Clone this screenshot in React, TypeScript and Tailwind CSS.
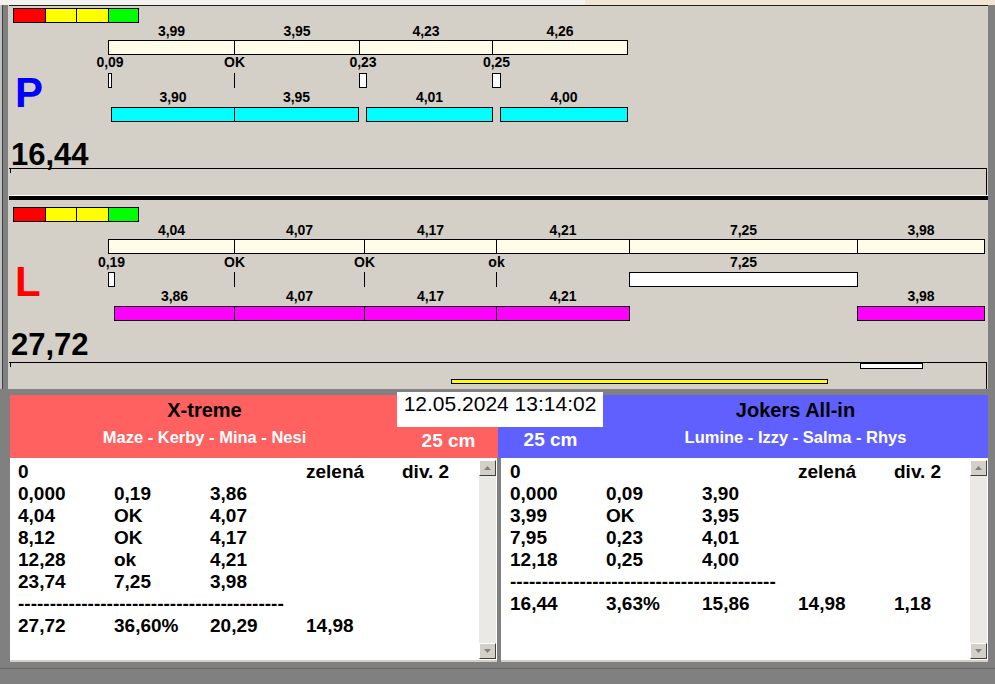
import React from "react";

const X0 = 9;

function Txt({ cx, capTop, t }: { cx: number; capTop: number; t: string }) {
  return (
    <div
      className="absolute -translate-x-1/2 whitespace-nowrap text-[14px] font-bold leading-none text-black"
      style={{ left: cx - X0, top: capTop - 2 }}
    >
      {t}
    </div>
  );
}

function Rect({ a, b, top, h, cls }: { a: number; b: number; top: number; h: number; cls: string }) {
  return (
    <div
      className={"absolute box-border border border-black " + cls}
      style={{ left: a - X0, width: b - a + 1, top, height: h }}
    />
  );
}

type Seg = [number, number, string];
type Marker = { a: number; b?: number; t: string };

type SectionProps = {
  cb: number;
  l1: number;
  b1: number;
  l2: number;
  mk: number;
  l3: number;
  b3: number;
  numCap: number;
  letCap: number;
  bar1: Seg[];
  markers: Marker[];
  bar3: Seg[];
  bar3cls: string;
  letter: string;
  letterCls: string;
  num: string;
};

function Chart(p: SectionProps) {
  const cbSegs: [number, number, string][] = [
    [13, 45, "bg-[#ff0000]"],
    [45, 76, "bg-[#ffff00]"],
    [76, 108, "bg-[#ffff00]"],
    [108, 138, "bg-[#00ff00]"],
  ];
  return (
    <div className="relative h-[162px]">
      {cbSegs.map(([a, b, c], i) => (
        <Rect key={"cb" + i} a={a} b={b} top={p.cb} h={15} cls={c} />
      ))}
      {p.bar1.map(([a, b, t], i) => (
        <React.Fragment key={"b1" + i}>
          <Rect a={a} b={b} top={p.b1} h={15} cls="bg-[#fffce8]" />
          <Txt cx={(a + b + 1) / 2} capTop={p.l1} t={t} />
        </React.Fragment>
      ))}
      {p.markers.map((m, i) => (
        <React.Fragment key={"mk" + i}>
          {m.b === undefined ? (
            <div className="absolute w-px h-[15px] bg-black" style={{ left: m.a - X0, top: p.mk }} />
          ) : (
            <Rect a={m.a} b={m.b} top={p.mk} h={15} cls="bg-white" />
          )}
          <Txt cx={m.b === undefined ? m.a + 0.5 : (m.a + m.b + 1) / 2} capTop={p.l2} t={m.t} />
        </React.Fragment>
      ))}
      {p.bar3.map(([a, b, t], i) => (
        <React.Fragment key={"b3" + i}>
          <Rect a={a} b={b} top={p.b3} h={15} cls={p.bar3cls} />
          <Txt cx={(a + b + 1) / 2} capTop={p.l3} t={t} />
        </React.Fragment>
      ))}
      <div
        className={"absolute left-[6px] text-[42px] font-bold leading-none " + p.letterCls}
        style={{ top: p.letCap - 5.5 }}
      >
        {p.letter}
      </div>
      <div className="absolute left-[2px] text-[31px] font-bold leading-none text-black" style={{ top: p.numCap - 4 }}>
        {p.num}
      </div>
    </div>
  );
}

const P: SectionProps = {
  cb: 2,
  l1: 20,
  b1: 34,
  l2: 51,
  mk: 67,
  l3: 86,
  b3: 101,
  numCap: 137,
  letCap: 71,
  bar1: [
    [108, 234, "3,99"],
    [234, 359, "3,95"],
    [359, 492, "4,23"],
    [492, 627, "4,26"],
  ],
  markers: [
    { a: 108, b: 111, t: "0,09" },
    { a: 234, t: "OK" },
    { a: 359, b: 366, t: "0,23" },
    { a: 492, b: 500, t: "0,25" },
  ],
  bar3: [
    [111, 234, "3,90"],
    [234, 358, "3,95"],
    [366, 492, "4,01"],
    [500, 627, "4,00"],
  ],
  bar3cls: "bg-[#00ffff]",
  letter: "P",
  letterCls: "text-[#0000ff]",
  num: "16,44",
};

const L: SectionProps = {
  cb: 7,
  l1: 25,
  b1: 39,
  l2: 57,
  mk: 72,
  l3: 91,
  b3: 106,
  numCap: 133,
  letCap: 66,
  bar1: [
    [108, 234, "4,04"],
    [234, 364, "4,07"],
    [364, 496, "4,17"],
    [496, 629, "4,21"],
    [629, 857, "7,25"],
    [857, 984, "3,98"],
  ],
  markers: [
    { a: 108, b: 114, t: "0,19" },
    { a: 234, t: "OK" },
    { a: 364, t: "OK" },
    { a: 496, t: "ok" },
    { a: 629, b: 857, t: "7,25" },
  ],
  bar3: [
    [114, 234, "3,86"],
    [234, 364, "4,07"],
    [364, 496, "4,17"],
    [496, 629, "4,21"],
    [857, 984, "3,98"],
  ],
  bar3cls: "bg-[#ff00ff]",
  letter: "L",
  letterCls: "text-[#ff0000]",
  num: "27,72",
};

function ScrollBtn({ down }: { down?: boolean }) {
  return (
    <div className="box-border h-[16px] w-[17px] border border-t-white border-l-white border-r-[#404040] border-b-[#404040] bg-[#d4d0c8] flex items-center justify-center">
      <svg width="7" height="4" viewBox="0 0 7 4">
        {down ? <path d="M0 0 H7 L3.5 4 Z" fill="#808080" /> : <path d="M0 4 H7 L3.5 0 Z" fill="#808080" />}
      </svg>
    </div>
  );
}

const DASH = "------------------------------------------";

function ListBox({ rows, pl }: { rows: string[][]; pl: string }) {
  return (
    <div className={"relative h-[204px] w-[487px] bg-white border-b-2 border-[#d4d0c8] pt-[3px] " + pl}>
      <div className="grid grid-cols-[96px_96px_96px_96px_96px] text-[19px] font-bold leading-[22px] text-black">
        {rows.map((r, i) =>
          r.length === 1 && r[0].startsWith("-") ? (
            <div key={i} className="col-span-5 whitespace-nowrap">
              {r[0]}
            </div>
          ) : (
            [0, 1, 2, 3, 4].map((c) => (
              <div key={i + "-" + c} className="whitespace-nowrap h-[22px]">
                {r[c] ?? ""}
              </div>
            ))
          )
        )}
      </div>
      <div className="absolute right-[1px] top-[2px] bottom-[1px] w-[17px] flex flex-col justify-between bg-[#ebe9e5]">
        <ScrollBtn />
        <ScrollBtn down />
      </div>
    </div>
  );
}

const leftRows = [
  ["0", "", "", "zelená", "div. 2"],
  ["0,000", "0,19", "3,86"],
  ["4,04", "OK", "4,07"],
  ["8,12", "OK", "4,17"],
  ["12,28", "ok", "4,21"],
  ["23,74", "7,25", "3,98"],
  [DASH],
  ["27,72", "36,60%", "20,29", "14,98"],
];

const rightRows = [
  ["0", "", "", "zelená", "div. 2"],
  ["0,000", "0,09", "3,90"],
  ["3,99", "OK", "3,95"],
  ["7,95", "0,23", "4,01"],
  ["12,18", "0,25", "4,00"],
  [DASH],
  ["16,44", "3,63%", "15,86", "14,98", "1,18"],
];

export default function App() {
  return (
    <div className="relative h-[684px] w-[995px] overflow-hidden bg-[#808080] font-['Liberation_Sans',Arial,Helvetica,sans-serif]">
      {/* top strip */}
      <div className="flex h-[5px]">
        <div className="w-[585px] bg-[#f4f2ee]" />
        <div className="flex-1 bg-[#f1e6d4]" />
      </div>
      <div className="flex">
        <div className="w-[9px] flex">
          <div className="w-[2px] bg-[#c0c0c0]" />
          <div className="w-px bg-[#404040]" />
          <div className="flex-1 bg-[#808080]" />
          <div className="w-px bg-[#d4d0c8]" />
        </div>
        <div className="w-[979px] flex flex-col">
          <div className="h-px bg-[#202020]" />
          <div className="bg-[#d4d0c8]">
            <Chart {...P} />
            <div className="relative h-[27px] w-[978px] border-t border-r border-black">
              <div className="absolute left-[1px] top-0 h-[4px] w-px bg-black" />
            </div>
            <div className="h-px bg-white" />
            <div className="h-[4px] bg-black" />
            <Chart {...L} />
            <div className="relative h-[27px] w-[978px] border-t border-r border-black">
              <div className="absolute left-[1px] top-0 h-[4px] w-px bg-black" />
              <div className="absolute left-[851px] top-0 h-[6px] w-[63px] border border-black bg-white" />
              <div className="absolute left-[442px] top-[16px] h-[5px] w-[377px] border border-black bg-[#ffff00]" />
            </div>
          </div>
        </div>
        <div className="flex-1 bg-[#808080]" />
      </div>

      {/* bottom */}
      <div className="relative">
        <div className="flex pl-[10px] pt-[6px]">
          <div className="flex w-[488px] flex-col">
            <div className="flex h-[63px] bg-[#ff6060]">
              <div className="flex w-[389px] flex-col items-center">
                <div className="mt-[5px] text-[20px] font-bold leading-none text-black">X-treme</div>
                <div className="mt-[9px] text-[16.5px] font-bold leading-none text-white">Maze - Kerby - Mina - Nesi</div>
              </div>
              <div className="flex flex-1 justify-center">
                <div className="mt-[35.5px] text-[19px] font-bold leading-none text-white">25 cm</div>
              </div>
            </div>
            <ListBox rows={leftRows} pl="pl-[8px]" />
          </div>
          <div className="flex w-[490px] flex-col">
            <div className="flex h-[63px] bg-[#6060ff]">
              <div className="flex w-[105px] justify-center">
                <div className="mt-[35px] text-[19px] font-bold leading-none text-white">25 cm</div>
              </div>
              <div className="flex flex-1 flex-col items-center">
                <div className="mt-[5px] text-[20px] font-bold leading-none text-black">Jokers All-in</div>
                <div className="mt-[9px] text-[16.5px] font-bold leading-none text-white">Lumine - Izzy - Salma - Rhys</div>
              </div>
            </div>
            <div className="pl-[3px]">
              <ListBox rows={rightRows} pl="pl-[9px]" />
            </div>
          </div>
        </div>
        <div className="mt-[6px] h-px bg-[#6a6a6a]" />
        <div className="absolute left-[397px] top-[3px] flex h-[35px] w-[206px] justify-center bg-white pt-[1px]">
          <div className="text-[21px] leading-none text-black">12.05.2024 13:14:02</div>
        </div>
      </div>
    </div>
  );
}
